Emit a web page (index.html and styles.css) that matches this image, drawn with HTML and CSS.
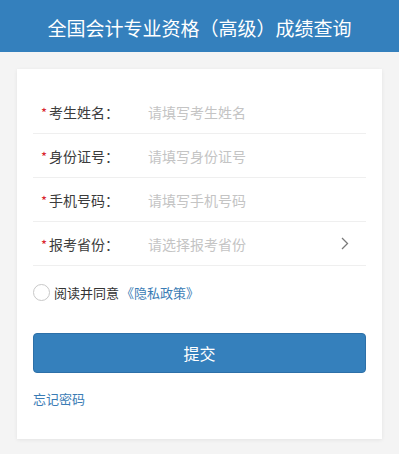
FILE: index.html
```html
<!DOCTYPE html>
<html lang="zh">
<head>
<meta charset="utf-8">
<link rel="stylesheet" href="styles.css">
</head>
<body>
<header class="topbar">全国会计专业资格（高级）成绩查询</header>
<main class="card">
  <div class="row">
    <span class="label"><i class="req">*</i>考生姓名：</span>
    <span class="ph">请填写考生姓名</span>
  </div>
  <div class="row">
    <span class="label"><i class="req">*</i>身份证号：</span>
    <span class="ph">请填写身份证号</span>
  </div>
  <div class="row">
    <span class="label"><i class="req">*</i>手机号码：</span>
    <span class="ph">请填写手机号码</span>
  </div>
  <div class="row">
    <span class="label"><i class="req">*</i>报考省份：</span>
    <span class="ph grow">请选择报考省份</span>
    <svg class="chev" width="8" height="13" viewBox="0 0 8 13"><path d="M1 1 L6.5 6.5 L1 12" fill="none" stroke="#7a7a7a" stroke-width="1.3"/></svg>
  </div>
  <div class="agree">
    <span class="circle"></span>
    <span>阅读并同意</span><span class="link">《隐私政策》</span>
  </div>
  <button class="submit">提交</button>
  <div class="forget">忘记密码</div>
</main>
</body>
</html>
```
FILE: styles.css
```css
* { box-sizing: border-box; }
html, body { margin: 0; padding: 0; }
body {
  width: 399px;
  height: 454px;
  background: #f4f4f4;
  font-family: "Noto Sans CJK SC", "Noto Sans", sans-serif;
  overflow: hidden;
}
.topbar {
  height: 52px;
  background: #3480bd;
  color: #fff;
  font-size: 19px;
  line-height: 52px;
  text-align: center;
  padding-top: 2px;
}
.card {
  margin: 17px 17px 0;
  background: #fff;
  padding: 21px 16px 31px;
  box-shadow: 0 1px 4px rgba(0,0,0,0.07);
}
.row {
  display: flex;
  align-items: center;
  height: 44px;
  border-bottom: 1px solid #efefef;
  padding-left: 8px;
  padding-right: 17px;
  font-size: 14px;
}
.label {
  width: 107px;
  color: #3c3c3c;
  display: flex;
  align-items: center;
}
.req {
  font-style: normal;
  color: #d9232d;
  font-size: 13px;
  width: 8px;
  margin-top: 2px;
}
.ph { color: #c4c4c4; }
.grow { flex: 1; }
.chev { display: block; }
.agree {
  display: flex;
  align-items: center;
  margin-top: 17px;
  height: 18px;
  font-size: 13px;
  color: #333;
}
.circle {
  width: 17px;
  height: 17px;
  border: 1px solid #c8c8c8;
  border-radius: 50%;
  margin-right: 4px;
}
.link { color: #3a7cb5; margin-left: 2px; }
.submit {
  display: block;
  width: 100%;
  height: 40px;
  margin-top: 32px;
  background: #3580bc;
  border: 1px solid #2d70a8;
  border-radius: 4px;
  color: #fff;
  font-family: inherit;
  font-size: 16px;
}
.forget {
  margin-top: 17px;
  line-height: 18px;
  font-size: 13px;
  color: #3a7cb5;
}
```
